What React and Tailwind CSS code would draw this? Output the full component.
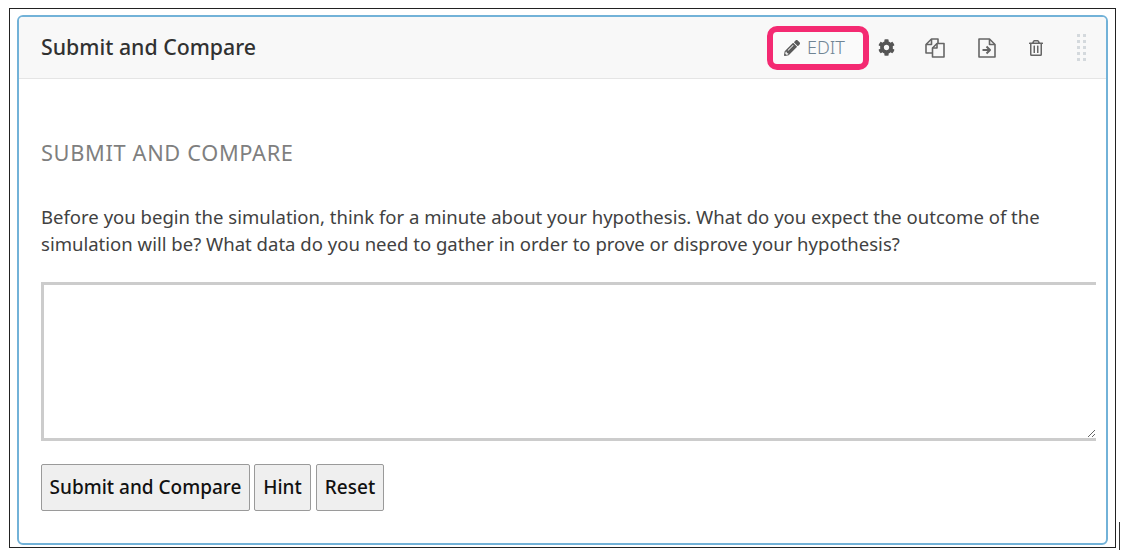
import React from 'react';
import { FaPencilAlt, FaCog, FaRegTrashAlt } from 'react-icons/fa';

const CopyIcon = () => (
  <svg width="20" height="20" viewBox="0 0 20 20" fill="none" stroke="#666" strokeWidth="1.6" strokeLinejoin="round">
    <path d="M13 5.5V1H6.5L1 6.5v8.5h6.5" />
    <path d="M6.5 1v5.5H1" />
    <path d="M12 5.5h7V19H7.5V10z" />
    <path d="M12 5.5V10H7.5" />
  </svg>
);

const ImportIcon = () => (
  <svg width="18" height="20" viewBox="0 0 18 20" fill="none" stroke="#666" strokeWidth="1.6" strokeLinejoin="round">
    <path d="M1 1h10.5L17 6.5V19H1z" />
    <path d="M11.5 1v5.5H17" />
    <path d="M4.5 12h7M8.5 8.5l3.5 3.5L8.5 15.5" strokeWidth="2" />
  </svg>
);

const DragHandle = () => (
  <div className="grid grid-cols-2 gap-[3px]">
    {Array.from({ length: 10 }).map((_, i) => (
      <span key={i} className="w-[3px] h-[3px] bg-[#d4d9dd]" />
    ))}
  </div>
);

const btn = "h-[47px] bg-[#efefef] border border-[#9a9a9a] rounded-[2px] text-[19px] font-medium text-[#111]";

export default function App() {
  return (
    <div className="relative w-[1129px] h-[558px] bg-white pt-[8px] pl-[9px] font-['Noto_Sans','Open_Sans',sans-serif]">
      <div className="w-[1107px] h-[540px] border border-[#222] pt-[6px] px-[7px]">
        <div className="w-[1091px] h-[530px] border-2 border-[#72b2d8] rounded-[6px] overflow-hidden">
          {/* header */}
          <div className="h-[62px] bg-[#f8f8f8] border-b border-[#e5e5e5] flex items-center pl-[22px]">
            <h2 className="pb-[2px] text-[21.3px] font-medium text-[#313131]">Submit and Compare</h2>
            <div className="ml-auto flex items-center">
              <div className="w-[102px] h-[44px] border-[6px] border-[#f42a72] rounded-[10px] bg-[#fafafa] flex items-center pl-[11px] gap-[7px]">
                <FaPencilAlt size={16} color="#5a5a5a" />
                <span className="text-[18px] font-light text-[#6f8494]">EDIT</span>
              </div>
              <span className="ml-[9px]"><FaCog size={17} color="#555" /></span>
              <span className="ml-[30px]"><CopyIcon /></span>
              <span className="ml-[33px]"><ImportIcon /></span>
              <span className="ml-[32px]"><FaRegTrashAlt size={16} color="#666" /></span>
              <span className="ml-[33px] mr-[20px]"><DragHandle /></span>
            </div>
          </div>
          {/* body */}
          <div className="pl-[22px] pr-[10px]">
            <h3 className="mt-[59px] text-[21.8px] leading-[30px] tracking-[0.65px] text-[#7f7f7f]">SUBMIT AND COMPARE</h3>
            <p className="mt-[35px] text-[18.55px] leading-[27px] text-[#414141]">
              Before you begin the simulation, think for a minute about your hypothesis. What do you expect the outcome of the
              <br />
              simulation will be? What data do you need to gather in order to prove or disprove your hypothesis?
            </p>
            <textarea className="block mt-[25px] w-full h-[159px] border-[3px] border-r-0 border-[#cccccc] bg-white resize-y" />
            <div className="mt-[23px] flex gap-[4px]">
              <button className={`${btn} w-[209px]`}>Submit and Compare</button>
              <button className={`${btn} w-[57px]`}>Hint</button>
              <button className={`${btn} w-[68px] ml-[1px]`}>Reset</button>
            </div>
          </div>
        </div>
      </div>
      <div className="absolute left-[1119px] top-[522px] w-px h-[28px] bg-[#333]" />
    </div>
  );
}
